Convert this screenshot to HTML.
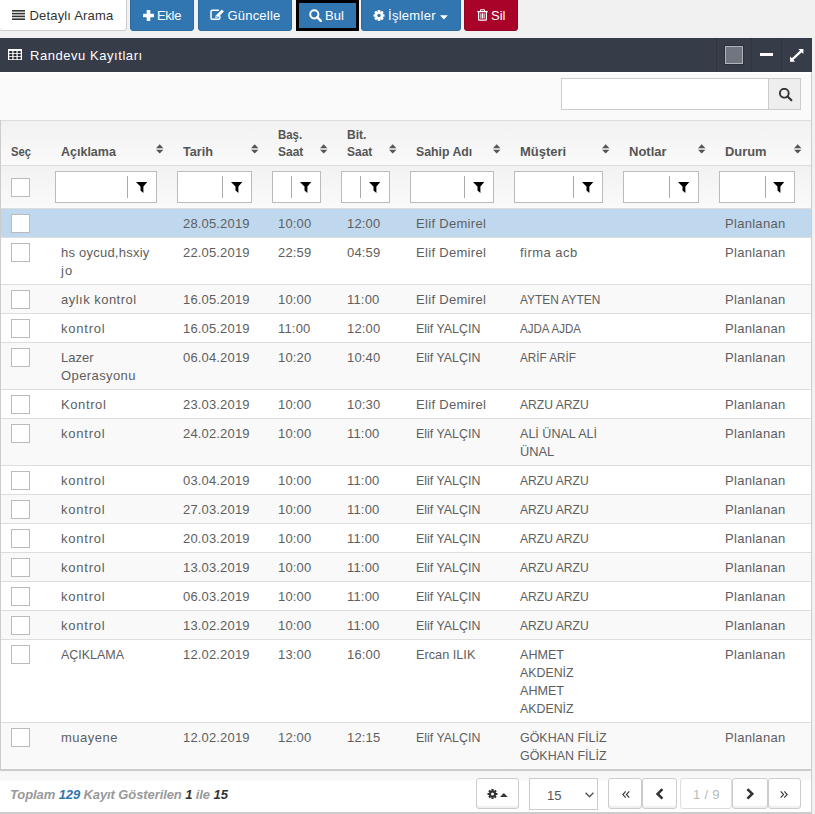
<!DOCTYPE html>
<html><head><meta charset="utf-8">
<style>
*{box-sizing:border-box;margin:0;padding:0}
html,body{width:815px;height:814px;overflow:hidden}
body{background:#f1f1f1;font-family:"Liberation Sans",sans-serif;font-size:13px;color:#555;position:relative}
.btn{position:absolute;top:-3px;height:33.5px;border-radius:3px;color:#fff;font-size:13px;line-height:18px;padding-top:8px;white-space:nowrap}
.b-def{background:#fff;border:1px solid #ccc;color:#333}
.b-pri{background:#3276b1;border:1px solid #2c699d}
.b-dan{background:#a90329;border:1px solid #900323}
.hdr{position:absolute;left:0;top:38px;width:812px;height:34px;background:#373c49;color:#fff}
.hdr .sep{position:absolute;top:0;width:1px;height:34px;background:#2e333e}
.ic{position:absolute;display:block}
.ft{position:absolute;left:10px;letter-spacing:-0.1px;top:786px;font-size:13px;line-height:18px;font-weight:bold;font-style:italic;white-space:nowrap}
.pb{position:absolute;top:778px;height:31px;border:1px solid #ccc;border-radius:3px;background:#fff;box-shadow:inset 0 -2px 0 #f0f0f0}
.fn{position:absolute;top:786px;font-size:13px;line-height:18px;white-space:nowrap}
.bt{position:absolute;top:7px;font-size:13px;line-height:18px;color:#fff;white-space:nowrap}
.ht{position:absolute;left:30px;top:47px;font-size:13px;letter-spacing:0.55px;line-height:18px;color:#fff;white-space:nowrap}
.box{position:absolute;left:0;top:72px;width:812px;height:742px;border-right:1px solid #ccc;background:#fafafa;border-top:2px solid #fff}
.srch{position:absolute;left:561px;top:78px;width:240px;height:32px;border:1px solid #ccc;background:#fff}
.srch .ad{position:absolute;right:0;top:0;width:32px;height:30px;background:#eee;border-left:1px solid #ccc}
table{position:absolute;left:1px;top:120px;border-collapse:collapse;table-layout:fixed;width:810px}
td,th{padding:0 0 0 10px;vertical-align:top;text-align:left;overflow:hidden}
thead tr{background:linear-gradient(#f2f2f2,#fafafa)}
tr.h1 th{height:45px;border-top:1px solid #ddd;border-bottom:1px solid #ddd;font-weight:bold;color:#555;line-height:17px;padding-top:5px;position:relative}
tr.h2 td{height:43px;border-bottom:1px solid #ddd;padding-left:4px;padding-top:5px}
tbody td{color:#5e5e5e;border-bottom:1px solid #ddd;line-height:18px;padding-top:6px;padding-bottom:4px}
tbody tr{background:#fff}
tbody tr:nth-child(odd){background:#f9f9f9}
tbody tr.sel{background:#c0d8ee}
.cb{display:block;width:19px;height:19px;border:1px solid #bbb;background:#fff;margin-top:-1px;margin-bottom:-1px}
.fi{position:relative;height:32px;margin-right:16px;border:1px solid #bbb;background:#fff}
.fi:before{content:"";position:absolute;right:28px;top:4px;width:1px;height:22px;background:#aaa}
.fi svg{position:absolute;right:8px;top:10px}
.sort{position:absolute;right:9px;top:22px}
</style></head><body>

<div class="btn b-def" style="left:-1px;width:128px"></div>
<svg class="ic" style="left:12px;top:10px" width="13" height="10" viewBox="0 0 13 10"><g fill="#333"><rect x="0" y="0" width="13" height="1.6"/><rect x="0" y="2.8" width="13" height="1.6"/><rect x="0" y="5.6" width="13" height="1.6"/><rect x="0" y="8.4" width="13" height="1.6"/></g></svg>
<div class="bt" style="left:29.5px;color:#333;letter-spacing:0.17px">Detaylı Arama</div>

<div class="btn b-pri" style="left:130px;width:64px"></div>
<svg class="ic" style="left:142.5px;top:9.5px" width="11" height="11" viewBox="0 0 11 11"><g fill="#fff"><rect x="3.7" y="0" width="3.6" height="11" rx="0.6"/><rect x="0" y="3.7" width="11" height="3.6" rx="0.6"/></g></svg>
<div class="bt" style="left:157px;letter-spacing:-0.3px">Ekle</div>

<div class="btn b-pri" style="left:198px;width:94px"></div>
<svg class="ic" style="left:209.5px;top:9px" width="15" height="11" viewBox="0 0 15 11"><path d="M9 1.2H2.2Q1 1.2 1 2.4V9Q1 10.2 2.2 10.2H8.6Q9.8 10.2 9.8 9V6.6" fill="none" stroke="#fff" stroke-width="1.5"/><path d="M11.8 0.4L13.9 2.5L7.9 8.5L5.2 9.1L5.8 6.4Z" fill="#fff"/><path d="M6.3 6.9L7.4 8" stroke="#3276b1" stroke-width="0.9"/></svg>
<div class="bt" style="left:227.5px;letter-spacing:0.2px">Güncelle</div>

<div class="btn b-pri" style="left:296px;top:0;height:31px;width:63px;border:3px solid #000;border-radius:0;background:#3276b1"></div>
<svg class="ic" style="left:308.5px;top:9.3px" width="13" height="13" viewBox="0 0 13 13"><circle cx="5.3" cy="5.3" r="4.1" fill="none" stroke="#fff" stroke-width="2"/><path d="M8.2 8.2L11.8 11.8" stroke="#fff" stroke-width="2.4" stroke-linecap="round"/></svg>
<div class="bt" style="left:325px">Bul</div>

<div class="btn b-pri" style="left:361px;width:100px"></div>
<svg class="ic" style="left:373.4px;top:10px" width="12" height="11" viewBox="-6 -5.5 12 11"><g fill="#fff"><circle r="3.9"/><rect x="-1.3" y="-5.5" width="2.6" height="11" rx="0.5"/><rect x="-1.3" y="-5.5" width="2.6" height="11" rx="0.5" transform="rotate(45)"/><rect x="-1.3" y="-5.5" width="2.6" height="11" rx="0.5" transform="rotate(90)"/><rect x="-1.3" y="-5.5" width="2.6" height="11" rx="0.5" transform="rotate(135)"/></g><circle r="1.7" fill="#3276b1"/></svg>
<div class="bt" style="left:388px;letter-spacing:0.28px">İşlemler</div>
<svg class="ic" style="left:440px;top:14.7px" width="8" height="5" viewBox="0 0 8 5"><path d="M0 0.2H7.8L3.9 4.4Z" fill="#fff"/></svg>

<div class="btn b-dan" style="left:464px;width:54px"></div>
<svg class="ic" style="left:477px;top:8.8px" width="11" height="12" viewBox="0 0 11 12"><g fill="none" stroke="#fff"><path d="M0.3 2.6H10.7" stroke-width="1.3"/><path d="M3.5 2.4V1.4Q3.5 0.7 4.2 0.7H6.8Q7.5 0.7 7.5 1.4V2.4" stroke-width="1.1"/><path d="M1.6 2.8V10.4Q1.6 11.2 2.4 11.2H8.6Q9.4 11.2 9.4 10.4V2.8" stroke-width="1.2"/><path d="M3.9 4.3V9.6M5.5 4.3V9.6M7.1 4.3V9.6" stroke-width="1"/></g></svg>
<div class="bt" style="left:491px">Sil</div>

<div class="hdr">
<div class="sep" style="left:716px"></div><div class="sep" style="left:751px"></div><div class="sep" style="left:781px"></div>
</div>
<svg class="ic" style="left:8px;top:49px" width="14" height="11" viewBox="0 0 14 11"><rect x="0" y="0" width="14" height="11" fill="#fff"/><g fill="#262a33"><rect x="1.3" y="2.0" width="3" height="2.2"/><rect x="5.5" y="2.0" width="3" height="2.2"/><rect x="9.7" y="2.0" width="3" height="2.2"/><rect x="1.3" y="5.0" width="3" height="2.2"/><rect x="5.5" y="5.0" width="3" height="2.2"/><rect x="9.7" y="5.0" width="3" height="2.2"/><rect x="1.3" y="8.0" width="3" height="2.2"/><rect x="5.5" y="8.0" width="3" height="2.2"/><rect x="9.7" y="8.0" width="3" height="2.2"/></g></svg>
<div class="ht">Randevu Kayıtları</div>
<div style="position:absolute;left:724px;top:45px;width:20px;height:20px;border:1px solid #2a2f3a;"><div style="width:18px;height:18px;border:1px solid #b0b4ba;background:#6f7680"></div></div>
<div style="position:absolute;left:760px;top:53px;width:13px;height:3px;background:#fff"></div>
<svg class="ic" style="left:789.7px;top:48.5px" width="14" height="13" viewBox="0 0 14 13"><path d="M8.3 0H13.4V5.1Z M0 7.6V12.7H5.1Z" fill="#fff"/><path d="M1.8 10.9L11.5 1.9" stroke="#fff" stroke-width="2.3"/></svg>

<div class="box"></div>
<div class="srch"><div class="ad"></div></div>
<svg class="ic" style="left:779.3px;top:88px" width="14" height="14" viewBox="0 0 14 14"><circle cx="5.3" cy="5.2" r="4.4" fill="none" stroke="#333" stroke-width="1.9"/><path d="M8.6 8.5L12.4 12.3" stroke="#333" stroke-width="2.1" stroke-linecap="round"/></svg>

<table>
<colgroup><col style="width:50px"><col style="width:122px"><col style="width:95px"><col style="width:69px"><col style="width:69px"><col style="width:104px"><col style="width:109px"><col style="width:96px"><col style="width:96px"></colgroup>
<thead>
<tr class="h1"><th><br><span style="display:inline-block;transform:scaleX(0.870);transform-origin:0 0">Seç</span></th><th><br><span style="display:inline-block;transform:scaleX(0.961);transform-origin:0 0">Açıklama</span></th><th><br><span style="display:inline-block;transform:scaleX(0.974);transform-origin:0 0">Tarih</span></th><th><span style="display:inline-block;transform:scaleX(0.880);transform-origin:0 0">Baş.</span><br><span style="display:inline-block;transform:scaleX(0.920);transform-origin:0 0">Saat</span></th><th><span style="display:inline-block;transform:scaleX(0.930);transform-origin:0 0">Bit.</span><br><span style="display:inline-block;transform:scaleX(0.920);transform-origin:0 0">Saat</span></th><th><br><span style="display:inline-block;transform:scaleX(0.945);transform-origin:0 0">Sahip Adı</span></th><th><br>Müşteri</th><th><br>Notlar</th><th><br><span style="display:inline-block;transform:scaleX(0.990);transform-origin:0 0">Durum</span></th></tr>
<tr class="h2"><td style="padding-left:10px;padding-top:13px"><span class="cb"></span></td><td><div class="fi"></div></td><td><div class="fi"></div></td><td><div class="fi"></div></td><td><div class="fi"></div></td><td><div class="fi"></div></td><td><div class="fi"></div></td><td><div class="fi"></div></td><td><div class="fi"></div></td></tr>
</thead>
<tbody>
<tr class="sel"><td><span class="cb"></span></td><td></td><td><span style="letter-spacing:0.16px">28.05.2019</span></td><td><span style="letter-spacing:0.18px">10:00</span></td><td><span style="letter-spacing:0.18px">12:00</span></td><td><span style="letter-spacing:0.31px">Elif Demirel</span></td><td></td><td></td><td><span style="letter-spacing:0.29px">Planlanan</span></td></tr>
<tr><td><span class="cb"></span></td><td><span style="letter-spacing:0.23px">hs oycud,hsxiy</span><br><span style="letter-spacing:1.05px">jo</span></td><td><span style="letter-spacing:0.16px">22.05.2019</span></td><td><span style="letter-spacing:0.18px">22:59</span></td><td><span style="letter-spacing:0.18px">04:59</span></td><td><span style="letter-spacing:0.31px">Elif Demirel</span></td><td><span style="letter-spacing:0.47px">firma acb</span></td><td></td><td><span style="letter-spacing:0.29px">Planlanan</span></td></tr>
<tr><td><span class="cb"></span></td><td><span style="letter-spacing:0.48px">aylık kontrol</span></td><td><span style="letter-spacing:0.16px">16.05.2019</span></td><td><span style="letter-spacing:0.18px">10:00</span></td><td><span style="letter-spacing:0.18px">11:00</span></td><td><span style="letter-spacing:0.31px">Elif Demirel</span></td><td><span style="display:inline-block;transform:scaleX(0.916);transform-origin:0 0">AYTEN AYTEN</span></td><td></td><td><span style="letter-spacing:0.29px">Planlanan</span></td></tr>
<tr><td><span class="cb"></span></td><td><span style="letter-spacing:0.78px">kontrol</span></td><td><span style="letter-spacing:0.16px">16.05.2019</span></td><td><span style="letter-spacing:0.18px">11:00</span></td><td><span style="letter-spacing:0.18px">12:00</span></td><td><span style="display:inline-block;transform:scaleX(0.955);transform-origin:0 0">Elif YALÇIN</span></td><td><span style="display:inline-block;transform:scaleX(0.888);transform-origin:0 0">AJDA AJDA</span></td><td></td><td><span style="letter-spacing:0.29px">Planlanan</span></td></tr>
<tr><td><span class="cb"></span></td><td><span style="letter-spacing:0.04px">Lazer</span><br><span style="letter-spacing:0.40px">Operasyonu</span></td><td><span style="letter-spacing:0.16px">06.04.2019</span></td><td><span style="letter-spacing:0.18px">10:20</span></td><td><span style="letter-spacing:0.18px">10:40</span></td><td><span style="display:inline-block;transform:scaleX(0.955);transform-origin:0 0">Elif YALÇIN</span></td><td><span style="display:inline-block;transform:scaleX(0.900);transform-origin:0 0">ARİF ARİF</span></td><td></td><td><span style="letter-spacing:0.29px">Planlanan</span></td></tr>
<tr><td><span class="cb"></span></td><td><span style="letter-spacing:0.61px">Kontrol</span></td><td><span style="letter-spacing:0.16px">23.03.2019</span></td><td><span style="letter-spacing:0.18px">10:00</span></td><td><span style="letter-spacing:0.18px">10:30</span></td><td><span style="letter-spacing:0.31px">Elif Demirel</span></td><td><span style="display:inline-block;transform:scaleX(0.932);transform-origin:0 0">ARZU ARZU</span></td><td></td><td><span style="letter-spacing:0.29px">Planlanan</span></td></tr>
<tr><td><span class="cb"></span></td><td><span style="letter-spacing:0.78px">kontrol</span></td><td><span style="letter-spacing:0.16px">24.02.2019</span></td><td><span style="letter-spacing:0.18px">10:00</span></td><td><span style="letter-spacing:0.18px">11:00</span></td><td><span style="display:inline-block;transform:scaleX(0.955);transform-origin:0 0">Elif YALÇIN</span></td><td><span style="display:inline-block;transform:scaleX(0.966);transform-origin:0 0">ALİ ÜNAL ALİ</span><br><span style="display:inline-block;transform:scaleX(0.988);transform-origin:0 0">ÜNAL</span></td><td></td><td><span style="letter-spacing:0.29px">Planlanan</span></td></tr>
<tr><td><span class="cb"></span></td><td><span style="letter-spacing:0.78px">kontrol</span></td><td><span style="letter-spacing:0.16px">03.04.2019</span></td><td><span style="letter-spacing:0.18px">10:00</span></td><td><span style="letter-spacing:0.18px">11:00</span></td><td><span style="display:inline-block;transform:scaleX(0.955);transform-origin:0 0">Elif YALÇIN</span></td><td><span style="display:inline-block;transform:scaleX(0.932);transform-origin:0 0">ARZU ARZU</span></td><td></td><td><span style="letter-spacing:0.29px">Planlanan</span></td></tr>
<tr><td><span class="cb"></span></td><td><span style="letter-spacing:0.78px">kontrol</span></td><td><span style="letter-spacing:0.16px">27.03.2019</span></td><td><span style="letter-spacing:0.18px">10:00</span></td><td><span style="letter-spacing:0.18px">11:00</span></td><td><span style="display:inline-block;transform:scaleX(0.955);transform-origin:0 0">Elif YALÇIN</span></td><td><span style="display:inline-block;transform:scaleX(0.932);transform-origin:0 0">ARZU ARZU</span></td><td></td><td><span style="letter-spacing:0.29px">Planlanan</span></td></tr>
<tr><td><span class="cb"></span></td><td><span style="letter-spacing:0.78px">kontrol</span></td><td><span style="letter-spacing:0.16px">20.03.2019</span></td><td><span style="letter-spacing:0.18px">10:00</span></td><td><span style="letter-spacing:0.18px">11:00</span></td><td><span style="display:inline-block;transform:scaleX(0.955);transform-origin:0 0">Elif YALÇIN</span></td><td><span style="display:inline-block;transform:scaleX(0.932);transform-origin:0 0">ARZU ARZU</span></td><td></td><td><span style="letter-spacing:0.29px">Planlanan</span></td></tr>
<tr><td><span class="cb"></span></td><td><span style="letter-spacing:0.78px">kontrol</span></td><td><span style="letter-spacing:0.16px">13.03.2019</span></td><td><span style="letter-spacing:0.18px">10:00</span></td><td><span style="letter-spacing:0.18px">11:00</span></td><td><span style="display:inline-block;transform:scaleX(0.955);transform-origin:0 0">Elif YALÇIN</span></td><td><span style="display:inline-block;transform:scaleX(0.932);transform-origin:0 0">ARZU ARZU</span></td><td></td><td><span style="letter-spacing:0.29px">Planlanan</span></td></tr>
<tr><td><span class="cb"></span></td><td><span style="letter-spacing:0.78px">kontrol</span></td><td><span style="letter-spacing:0.16px">06.03.2019</span></td><td><span style="letter-spacing:0.18px">10:00</span></td><td><span style="letter-spacing:0.18px">11:00</span></td><td><span style="display:inline-block;transform:scaleX(0.955);transform-origin:0 0">Elif YALÇIN</span></td><td><span style="display:inline-block;transform:scaleX(0.932);transform-origin:0 0">ARZU ARZU</span></td><td></td><td><span style="letter-spacing:0.29px">Planlanan</span></td></tr>
<tr><td><span class="cb"></span></td><td><span style="letter-spacing:0.78px">kontrol</span></td><td><span style="letter-spacing:0.16px">13.02.2019</span></td><td><span style="letter-spacing:0.18px">10:00</span></td><td><span style="letter-spacing:0.18px">11:00</span></td><td><span style="display:inline-block;transform:scaleX(0.955);transform-origin:0 0">Elif YALÇIN</span></td><td><span style="display:inline-block;transform:scaleX(0.932);transform-origin:0 0">ARZU ARZU</span></td><td></td><td><span style="letter-spacing:0.29px">Planlanan</span></td></tr>
<tr><td><span class="cb"></span></td><td><span style="display:inline-block;transform:scaleX(0.958);transform-origin:0 0">AÇIKLAMA</span></td><td><span style="letter-spacing:0.16px">12.02.2019</span></td><td><span style="letter-spacing:0.18px">13:00</span></td><td><span style="letter-spacing:0.18px">16:00</span></td><td><span style="display:inline-block;transform:scaleX(0.978);transform-origin:0 0">Ercan ILIK</span></td><td><span style="display:inline-block;transform:scaleX(0.967);transform-origin:0 0">AHMET</span><br><span style="display:inline-block;transform:scaleX(0.951);transform-origin:0 0">AKDENİZ</span><br><span style="display:inline-block;transform:scaleX(0.967);transform-origin:0 0">AHMET</span><br><span style="display:inline-block;transform:scaleX(0.951);transform-origin:0 0">AKDENİZ</span></td><td></td><td><span style="letter-spacing:0.29px">Planlanan</span></td></tr>
<tr><td><span class="cb"></span></td><td><span style="letter-spacing:0.48px">muayene</span></td><td><span style="letter-spacing:0.16px">12.02.2019</span></td><td><span style="letter-spacing:0.18px">12:00</span></td><td><span style="letter-spacing:0.18px">12:15</span></td><td><span style="display:inline-block;transform:scaleX(0.955);transform-origin:0 0">Elif YALÇIN</span></td><td><span style="display:inline-block;transform:scaleX(0.958);transform-origin:0 0">GÖKHAN FİLİZ</span><br><span style="display:inline-block;transform:scaleX(0.958);transform-origin:0 0">GÖKHAN FİLİZ</span></td><td></td><td><span style="letter-spacing:0.29px">Planlanan</span></td></tr>
</tbody>
</table>
<svg class="ic" style="left:156px;top:143.5px" width="8" height="10" viewBox="0 0 8 10"><path d="M0 4.3L3.7 0.3L7.4 4.3Z M0 5.7H7.4L3.7 9.6Z" fill="#555"/></svg>
<svg class="ic" style="left:251px;top:143.5px" width="8" height="10" viewBox="0 0 8 10"><path d="M0 4.3L3.7 0.3L7.4 4.3Z M0 5.7H7.4L3.7 9.6Z" fill="#555"/></svg>
<svg class="ic" style="left:320px;top:143.5px" width="8" height="10" viewBox="0 0 8 10"><path d="M0 4.3L3.7 0.3L7.4 4.3Z M0 5.7H7.4L3.7 9.6Z" fill="#555"/></svg>
<svg class="ic" style="left:389px;top:143.5px" width="8" height="10" viewBox="0 0 8 10"><path d="M0 4.3L3.7 0.3L7.4 4.3Z M0 5.7H7.4L3.7 9.6Z" fill="#555"/></svg>
<svg class="ic" style="left:493px;top:143.5px" width="8" height="10" viewBox="0 0 8 10"><path d="M0 4.3L3.7 0.3L7.4 4.3Z M0 5.7H7.4L3.7 9.6Z" fill="#555"/></svg>
<svg class="ic" style="left:602px;top:143.5px" width="8" height="10" viewBox="0 0 8 10"><path d="M0 4.3L3.7 0.3L7.4 4.3Z M0 5.7H7.4L3.7 9.6Z" fill="#555"/></svg>
<svg class="ic" style="left:698px;top:143.5px" width="8" height="10" viewBox="0 0 8 10"><path d="M0 4.3L3.7 0.3L7.4 4.3Z M0 5.7H7.4L3.7 9.6Z" fill="#555"/></svg>
<svg class="ic" style="left:794px;top:143.5px" width="8" height="10" viewBox="0 0 8 10"><path d="M0 4.3L3.7 0.3L7.4 4.3Z M0 5.7H7.4L3.7 9.6Z" fill="#555"/></svg>
<svg class="ic" style="left:136.3px;top:181.8px" width="12" height="11" viewBox="0 0 12 11"><path d="M0 0.1H11.3L7.4 4.4V10.9L4.5 8.6V4.4Z" fill="#000"/></svg>
<svg class="ic" style="left:231.3px;top:181.8px" width="12" height="11" viewBox="0 0 12 11"><path d="M0 0.1H11.3L7.4 4.4V10.9L4.5 8.6V4.4Z" fill="#000"/></svg>
<svg class="ic" style="left:300.3px;top:181.8px" width="12" height="11" viewBox="0 0 12 11"><path d="M0 0.1H11.3L7.4 4.4V10.9L4.5 8.6V4.4Z" fill="#000"/></svg>
<svg class="ic" style="left:369.3px;top:181.8px" width="12" height="11" viewBox="0 0 12 11"><path d="M0 0.1H11.3L7.4 4.4V10.9L4.5 8.6V4.4Z" fill="#000"/></svg>
<svg class="ic" style="left:473.3px;top:181.8px" width="12" height="11" viewBox="0 0 12 11"><path d="M0 0.1H11.3L7.4 4.4V10.9L4.5 8.6V4.4Z" fill="#000"/></svg>
<svg class="ic" style="left:582.3px;top:181.8px" width="12" height="11" viewBox="0 0 12 11"><path d="M0 0.1H11.3L7.4 4.4V10.9L4.5 8.6V4.4Z" fill="#000"/></svg>
<svg class="ic" style="left:678.3px;top:181.8px" width="12" height="11" viewBox="0 0 12 11"><path d="M0 0.1H11.3L7.4 4.4V10.9L4.5 8.6V4.4Z" fill="#000"/></svg>
<svg class="ic" style="left:773.3px;top:181.8px" width="12" height="11" viewBox="0 0 12 11"><path d="M0 0.1H11.3L7.4 4.4V10.9L4.5 8.6V4.4Z" fill="#000"/></svg>



<div style="position:absolute;left:0;top:769px;width:812px;height:2px;background:#ccc"></div>
<div style="position:absolute;left:0;top:771px;width:811px;height:41px;background:linear-gradient(#f6f6f6 0,#f8f8f8 9px,#fff 10px,#fff)"></div>
<div style="position:absolute;left:0;top:812px;width:812px;height:2px;background:#ccc"></div>
<div style="position:absolute;left:811px;top:72px;width:1px;height:742px;background:#ccc"></div>
<div style="position:absolute;left:0;top:120px;width:1px;height:651px;background:#ccc"></div>
<div class="ft"><span style="color:#999">Toplam </span><span style="color:#3276b1">129</span><span style="color:#999"> Kayıt Gösterilen </span><span style="color:#333">1</span><span style="color:#999"> ile </span><span style="color:#333">15</span></div>
<div class="pb" style="left:476px;width:43px"></div>
<svg class="ic" style="left:486.8px;top:788.7px" width="11" height="10" viewBox="-5.5 -5 11 10"><g fill="#333"><circle r="3.5"/><rect x="-1.1" y="-5" width="2.2" height="10" rx="0.4"/><rect x="-1.1" y="-5" width="2.2" height="10" rx="0.4" transform="rotate(45)"/><rect x="-1.1" y="-5" width="2.2" height="10" rx="0.4" transform="rotate(90)"/><rect x="-1.1" y="-5" width="2.2" height="10" rx="0.4" transform="rotate(135)"/></g><circle r="1.5" fill="#fff"/></svg>
<svg class="ic" style="left:500.3px;top:792.8px" width="8" height="4" viewBox="0 0 8 4"><path d="M0 4H7.7L3.85 0Z" fill="#333"/></svg>
<div style="position:absolute;left:529px;top:778px;width:69px;height:32px;border:1px solid #ccc;background:#fff"></div>
<div class="fn" style="left:547px;top:787px;color:#555">15</div>
<svg class="ic" style="left:584.5px;top:791.5px" width="9" height="6" viewBox="0 0 9 6"><path d="M0.6 0.8L4.5 4.7L8.4 0.8" fill="none" stroke="#555" stroke-width="1.4"/></svg>
<div class="pb" style="left:608px;width:34px"></div>
<div class="pb" style="left:642px;width:35px"></div>
<div class="pb" style="left:680px;width:52px;border-color:#ddd;box-shadow:none"></div>
<div class="pb" style="left:732px;width:36px"></div>
<div class="pb" style="left:768px;width:33px"></div>
<svg class="ic" style="left:621.5px;top:791px" width="8" height="7" viewBox="0 0 8 7"><path d="M3.7 0.4L0.8 3.5L3.7 6.6M7.3 0.4L4.4 3.5L7.3 6.6" fill="none" stroke="#3a3a3a" stroke-width="1.15"/></svg>
<svg class="ic" style="left:656px;top:788px" width="8" height="12" viewBox="0 0 8 12"><path d="M6.4 1.1L1.6 5.9L6.4 10.7" fill="none" stroke="#333" stroke-width="2.6"/></svg>
<div class="fn" style="left:693px;color:#b8b8b8;letter-spacing:0.3px">1 / 9</div>
<svg class="ic" style="left:745.5px;top:788px" width="8" height="12" viewBox="0 0 8 12"><path d="M1.4 1.1L6.2 5.9L1.4 10.7" fill="none" stroke="#333" stroke-width="2.6"/></svg>
<svg class="ic" style="left:780.3px;top:791px" width="8" height="7" viewBox="0 0 8 7"><path d="M0.7 0.4L3.6 3.5L0.7 6.6M4.3 0.4L7.2 3.5L4.3 6.6" fill="none" stroke="#3a3a3a" stroke-width="1.15"/></svg>
</body></html>
